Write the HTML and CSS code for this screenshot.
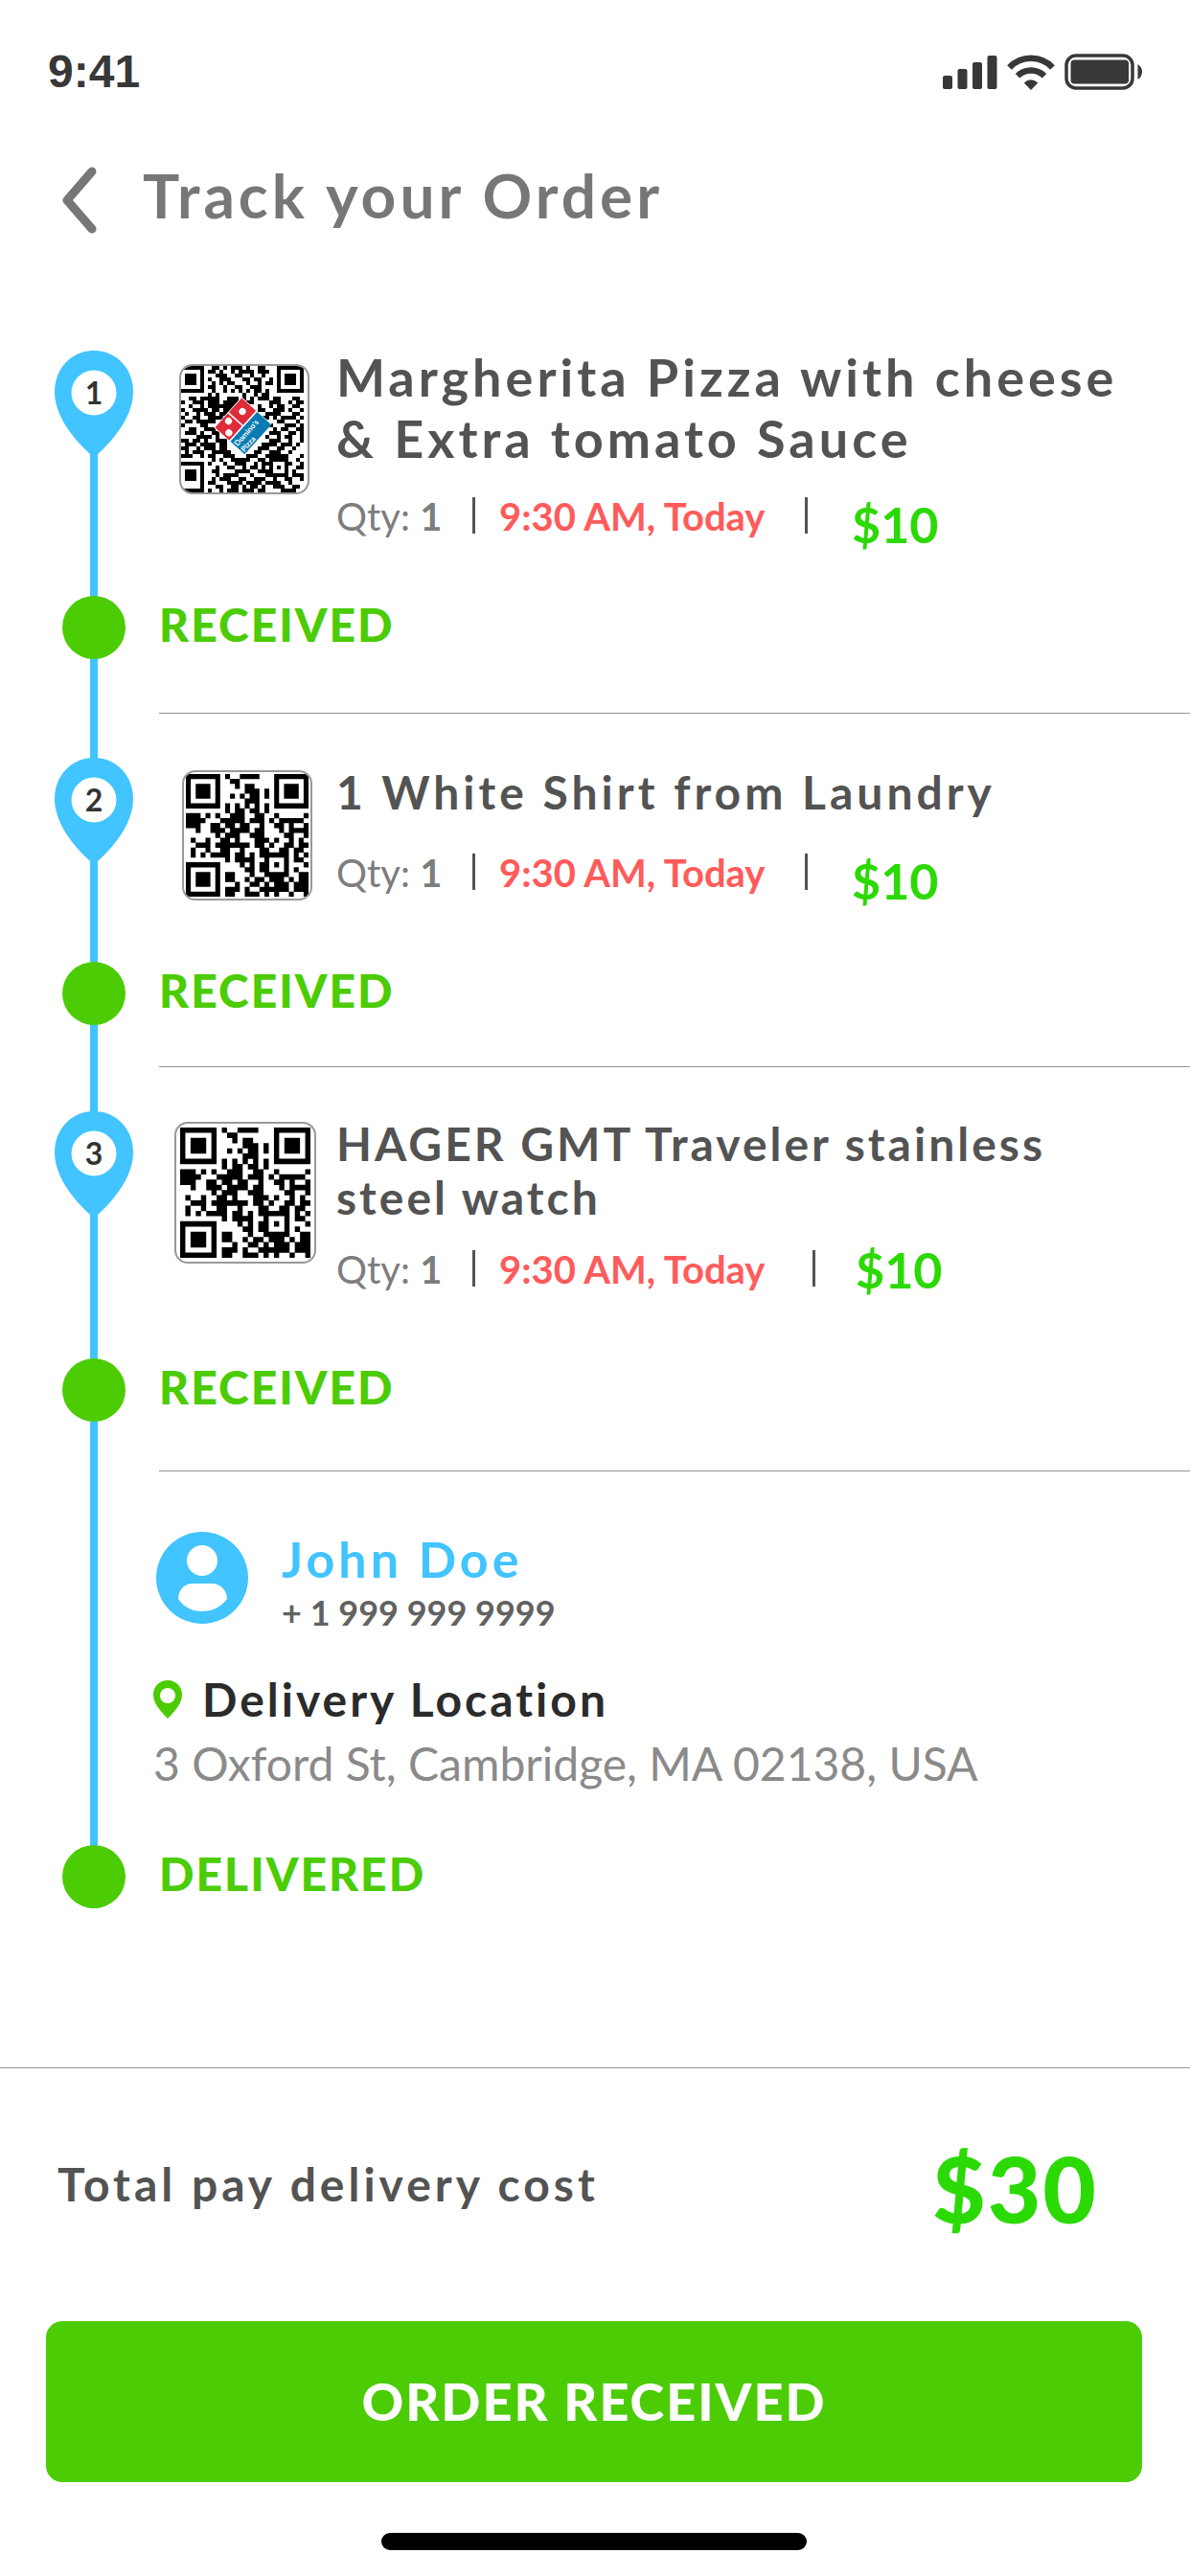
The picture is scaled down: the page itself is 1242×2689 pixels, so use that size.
FILE: index.html
```html
<!DOCTYPE html>
<html lang="en">
<head>
<meta charset="utf-8">
<meta name="viewport" content="width=device-width, initial-scale=1">
<title>Track your Order</title>
<link rel="stylesheet" href="styles.css">
</head>
<body>
<svg class="symbols" aria-hidden="true">
  <symbol id="pin" viewBox="0 0 82 108">
    <path fill="#41c4ff" d="M41 0C18 0 0 18 0 43C0 66 17 90 37 108H45C65 90 82 66 82 43C82 18 64 0 41 0Z"/>
    <circle cx="41" cy="44" r="23.5" fill="#fff"/>
  </symbol>
  <symbol id="qr-web" viewBox="0 -.5 25 25">
    <path stroke="#000" stroke-width="1.04" d="M0 0h7M8 0h1M11 0h4M18 0h7M0 1h1M6 1h1M9 1h2M18 1h1M24 1h1M0 2h1M2 2h3M6 2h1M10 2h1M12 2h2M18 2h1M20 2h3M24 2h1M0 3h1M2 3h3M6 3h1M12 3h3M16 3h1M18 3h1M20 3h3M24 3h1M0 4h1M2 4h3M6 4h1M9 4h1M11 4h1M13 4h2M16 4h1M18 4h1M20 4h3M24 4h1M0 5h1M6 5h1M12 5h3M18 5h1M24 5h1M0 6h7M8 6h1M10 6h1M12 6h1M14 6h1M16 6h1M18 6h7M8 7h1M10 7h2M13 7h2M16 7h1M0 8h3M4 8h1M6 8h1M9 8h3M14 8h2M18 8h1M24 8h1M0 9h4M7 9h5M13 9h3M17 9h1M19 9h5M0 10h3M5 10h2M8 10h2M11 10h2M15 10h1M18 10h2M21 10h1M24 10h1M2 11h1M5 11h3M9 11h4M14 11h2M19 11h1M21 11h4M6 12h1M8 12h3M13 12h2M15 12h1M20 12h2M24 12h1M1 13h1M4 13h1M7 13h2M10 13h1M14 13h3M18 13h1M21 13h1M23 13h1M2 14h3M6 14h7M14 14h2M17 14h1M20 14h2M23 14h2M1 15h1M4 15h1M7 15h2M11 15h1M15 15h2M19 15h2M22 15h2M1 16h1M3 16h1M5 16h4M10 16h2M13 16h1M15 16h6M22 16h1M24 16h1M8 17h1M10 17h4M16 17h1M20 17h1M22 17h2M0 18h7M11 18h1M13 18h1M15 18h2M18 18h1M20 18h1M24 18h1M0 19h1M6 19h1M12 19h2M15 19h2M20 19h1M22 19h1M0 20h1M2 20h3M6 20h1M8 20h2M13 20h1M16 20h5M23 20h2M0 21h1M2 21h3M6 21h1M8 21h2M12 21h1M14 21h2M17 21h3M21 21h1M23 21h2M0 22h1M2 22h3M6 22h1M10 22h1M13 22h2M16 22h1M18 22h3M22 22h3M0 23h1M6 23h1M8 23h3M12 23h1M15 23h5M20 23h1M22 23h3M0 24h7M8 24h2M12 24h3M16 24h1M18 24h1M21 24h1M24 24h1"/>
  </symbol>
</svg>

<div class="status-bar">
  <time class="clock">9:41</time>
  <svg class="system-icons" viewBox="0 0 208 38" role="img" aria-label="Signal, Wi-Fi and battery">
    <g fill="#383838">
      <rect x="0" y="23" width="10" height="14" rx="2"/>
      <rect x="15.5" y="16" width="10" height="21" rx="2"/>
      <rect x="31" y="9" width="10" height="28" rx="2"/>
      <rect x="46.500" y="2" width="10" height="35" rx="2"/>
      <path d="M84.700 30.500Q92 23.800 99.300 30.500L92 38Z"/>
      <rect x="133.500" y="6.500" width="60.500" height="25" rx="4"/>
      <path d="M203.500 11Q208 14 208 19T203.500 27Z"/>
    </g>
    <g fill="none" stroke="#383838">
      <path stroke-width="6.500" d="M69.500 14.500A31 31 0 0 1 114.500 14.500M78 23.300A20 20 0 0 1 106 23.300"/>
      <rect x="129" y="2" width="69" height="34" rx="10" stroke-width="3.500"/>
    </g>
  </svg>
</div>

<header class="page-header">
  <a class="back" href="#" aria-label="Back">
    <svg viewBox="0 0 37 70"><path d="M32 5L6 35L32 65" fill="none" stroke="#777" stroke-width="9" stroke-linecap="round" stroke-linejoin="round"/></svg>
  </a>
  <h1>Track your Order</h1>
</header>

<main>
  <section class="stop stop-first">
    <div class="rail"><span class="pin"><svg><use href="#pin"/></svg><b>1</b></span></div>
    <article class="item">
      <div class="qr">
        <svg viewBox="0 -.5 33 33" role="img" aria-label="QR code">
          <path stroke="#000" stroke-width="1.04" d="M0 0h6M8 0h2M11 0h1M13 0h3M17 0h1M20 0h2M25 0h7M5 1h1M7 1h2M10 1h1M13 1h1M15 1h4M20 1h3M25 1h1M31 1h1M1 2h3M5 2h1M9 2h3M14 2h2M18 2h1M21 2h1M25 2h1M27 2h3M31 2h1M1 3h3M5 3h1M7 3h1M10 3h3M16 3h2M19 3h2M23 3h1M25 3h1M27 3h3M31 3h1M1 4h3M5 4h1M8 4h1M10 4h1M12 4h2M17 4h1M20 4h1M22 4h2M25 4h1M27 4h3M31 4h1M5 5h1M7 5h2M11 5h1M14 5h2M18 5h3M25 5h1M31 5h1M0 6h6M8 6h1M11 6h1M13 6h1M15 6h1M17 6h1M19 6h2M22 6h1M25 6h7M7 7h1M9 7h1M16 7h1M19 7h1M21 7h2M2 8h2M5 8h5M12 8h3M16 8h1M18 8h1M20 8h3M24 8h2M29 8h2M0 9h1M3 9h3M7 9h3M11 9h4M17 9h2M23 9h3M28 9h1M30 9h2M2 10h1M5 10h1M7 10h7M15 10h3M20 10h1M23 10h1M25 10h2M29 10h2M0 11h1M3 11h4M8 11h2M11 11h4M20 11h2M24 11h3M28 11h1M31 11h1M1 12h1M4 12h1M6 12h3M10 12h3M22 12h4M29 12h2M0 13h1M3 13h2M7 13h4M21 13h2M24 13h1M26 13h4M31 13h1M1 14h2M4 14h5M21 14h1M25 14h2M30 14h1M0 15h1M5 15h2M22 15h2M27 15h3M31 15h1M2 16h2M6 16h3M24 16h1M26 16h2M30 16h2M1 17h3M5 17h1M8 17h2M23 17h3M28 17h2M31 17h1M4 18h4M9 18h1M22 18h1M25 18h1M27 18h2M31 18h1M0 19h2M3 19h2M6 19h1M9 19h3M23 19h3M28 19h1M31 19h1M1 20h3M5 20h4M10 20h2M21 20h4M26 20h3M30 20h1M0 21h2M4 21h1M6 21h3M10 21h2M20 21h3M25 21h2M29 21h1M1 22h1M3 22h3M8 22h5M19 22h2M23 22h3M28 22h1M0 23h3M5 23h1M7 23h2M11 23h3M17 23h3M22 23h6M31 23h1M8 24h1M10 24h1M13 24h5M20 24h2M23 24h5M30 24h1M0 25h6M7 25h1M11 25h1M14 25h3M19 25h1M21 25h3M27 25h2M31 25h1M5 26h1M9 26h1M12 26h2M16 26h1M18 26h2M21 26h1M23 26h1M25 26h1M27 26h1M30 26h2M1 27h3M5 27h1M8 27h2M14 27h4M20 27h4M27 27h1M29 27h1M1 28h3M5 28h1M9 28h1M11 28h4M18 28h1M22 28h6M29 28h3M1 29h3M5 29h1M8 29h1M10 29h3M15 29h2M19 29h3M24 29h1M27 29h2M31 29h1M5 30h1M7 30h2M12 30h4M17 30h4M22 30h4M28 30h1M5 31h1M9 31h2M13 31h2M16 31h1M18 31h2M21 31h1M24 31h3M29 31h2M0 32h6M7 32h1M10 32h1M12 32h3M16 32h3M20 32h2M26 32h4"/>
          <g transform="translate(16.2 15.2) rotate(-48)">
            <path fill="#fff" d="M-5.400-5.400H5.400V5.200H-5.400Z"/>
            <path fill="#df2b3a" d="M-5.200-5.200H-.2V-.2H-5.200Z M.2-5.200H5.200V-.2H.2Z"/>
            <path fill="#0a7bb2" d="M-5.200.2H5.200V5.200H-5.200Z"/>
            <circle cx="-3.800" cy="-1.600" r=".9" fill="#fff"/>
            <circle cx="-1.600" cy="-3.700" r=".9" fill="#fff"/>
            <circle cx="2.700" cy="-2.700" r=".9" fill="#fff"/>
            <text class="logo-text" x="-4.900" y="2.500">Domino's</text>
            <text class="logo-text" x="-4.900" y="4.800">Pizza</text>
          </g>
        </svg>
      </div>
      <div class="details">
        <h2>Margherita Pizza with cheese &amp; Extra tomato Sauce</h2>
        <p class="meta meta-dropped"><span>Qty: <b>1</b></span><i class="bar"></i><span class="when">9:30 AM, Today</span><i class="bar"></i><span class="price">$10</span></p>
      </div>
    </article>
    <div class="rail rail-dot"><span class="dot"></span></div>
    <p class="state">RECEIVED</p>
  </section>

  <section class="stop stop-second">
    <div class="rail"><span class="pin"><svg><use href="#pin"/></svg><b>2</b></span></div>
    <article class="item">
      <div class="qr qr-framed"><svg role="img" aria-label="QR code"><use href="#qr-web"/></svg></div>
      <div class="details">
        <h2>1 White Shirt from Laundry</h2>
        <p class="meta meta-dropped"><span>Qty: <b>1</b></span><i class="bar"></i><span class="when">9:30 AM, Today</span><i class="bar"></i><span class="price">$10</span></p>
      </div>
    </article>
    <div class="rail rail-dot"><span class="dot"></span></div>
    <p class="state">RECEIVED</p>
  </section>

  <section class="stop stop-third">
    <div class="rail"><span class="pin"><svg><use href="#pin"/></svg><b>3</b></span></div>
    <article class="item">
      <div class="qr qr-framed qr-large"><svg role="img" aria-label="QR code"><use href="#qr-web"/></svg></div>
      <div class="details">
        <h2>HAGER GMT Traveler stainless steel watch</h2>
        <p class="meta"><span>Qty: <b>1</b></span><i class="bar"></i><span class="when">9:30 AM, Today</span><i class="bar"></i><span class="price">$10</span></p>
      </div>
    </article>
    <div class="rail rail-dot"><span class="dot"></span></div>
    <p class="state">RECEIVED</p>
  </section>

  <section class="stop stop-last">
    <div class="rail"></div>
    <div class="delivery">
      <div class="person">
        <svg class="avatar" viewBox="0 0 96 96" aria-hidden="true">
          <circle cx="48" cy="48" r="48" fill="#41c4ff"/>
          <circle cx="48" cy="30" r="16" fill="#fff"/>
          <path fill="#fff" d="M38 54H58C67 54 74 61 74 70Q64 83 48 83T23 70C23 61 29 54 38 54Z"/>
        </svg>
        <div>
          <h2 class="name">John Doe</h2>
          <a class="phone" href="tel:+19999999999">+ 1 999 999 9999</a>
        </div>
      </div>
      <h3 class="place">
        <svg viewBox="0 0 30 40" aria-hidden="true"><path fill="#4bcc04" fill-rule="evenodd" d="M15 0C6 0 0 7 0 15C0 24 7 32 15 40C23 32 30 24 30 15C30 7 24 0 15 0ZM15 8A8 8 0 1 1 15 24A8 8 0 1 1 15 8Z"/></svg>
        Delivery Location
      </h3>
      <address>3 Oxford St, Cambridge, MA 02138, USA</address>
    </div>
    <div class="rail rail-dot"><span class="dot"></span></div>
    <p class="state">DELIVERED</p>
  </section>
</main>

<footer>
  <p class="total"><span>Total pay delivery cost</span><strong>$30</strong></p>
  <button class="confirm" type="button">ORDER RECEIVED</button>
  <div class="home-indicator"></div>
</footer>
</body>
</html>
```
FILE: styles.css
```css
* { box-sizing: border-box; }

body {
  margin: 0;
  background: #fff;
  color: #535353;
  font-family: Lato, "Open Sans", sans-serif;
}

h1, h2, h3, p { margin: 0; }
svg { display: block; }
.symbols { position: absolute; width: 0; height: 0; }

.status-bar {
  display: flex;
  justify-content: space-between;
  align-items: center;
  padding: 47px 50px 0;
}
.clock {
  font: bold 48px/56px "Liberation Sans", Arial, sans-serif;
  color: #383838;
}
.system-icons { width: 208px; height: 38px; }

.page-header {
  display: flex;
  align-items: flex-end;
  gap: 48px;
  padding: 61px 64px 118px;
  color: #777;
}
.back svg { width: 37px; height: 70px; }
h1 {
  font-size: 64px;
  line-height: 80px;
  letter-spacing: 4px;
}

.stop {
  display: grid;
  grid-template-columns: 82px 1fr;
  column-gap: 21px;
  padding-left: 57px;
}
.rail {
  display: flex;
  flex-direction: column;
  align-items: center;
  padding-top: 46px;
  background: linear-gradient(#41c4ff, #41c4ff) center / 8px 100% no-repeat;
}
.rail-dot, .stop-last .rail { padding-top: 0; }
.stop-first .rail:first-child {
  margin-top: 4px;
  padding-top: 0;
}
.pin {
  display: grid;
  justify-items: center;
}
.pin > * { grid-area: 1 / 1; }
.pin svg { width: 82px; height: 108px; }
.pin b {
  font-size: 32px;
  line-height: 88px;
  color: #333;
}
.dot {
  width: 66px;
  height: 66px;
  border-radius: 50%;
  background: #4bcc04;
}

.item {
  display: grid;
  grid-template-columns: 191px 1fr;
  padding-top: 52px;
}
.stop-first .item { padding: 0 0 55px; }
.stop-second .item { padding: 54px 0 64px; }
.stop-third .item { padding-bottom: 73px; }

.qr {
  width: 136px;
  height: 136px;
  margin: 5px 0 0 30px;
  border: 2px solid #999;
  border-radius: 14px;
  overflow: hidden;
}
.qr svg { width: 100%; height: 100%; }
.qr-framed { padding: 2px; }
.qr-large {
  width: 148px;
  height: 148px;
  margin-left: 22px;
  padding: 4px;
}
.stop-first .qr { margin: 18px 0 0 27px; }
.logo-text {
  font: bold 2px Lato, sans-serif;
  fill: #fff;
}

.item h2 {
  max-width: 800px;
  margin-bottom: 27px;
  font-size: 48px;
  line-height: 56px;
  letter-spacing: 3px;
}
.stop-first h2 {
  max-width: 840px;
  margin-bottom: 29px;
  font-size: 54px;
  line-height: 64px;
  letter-spacing: 4px;
}
.stop-second h2 {
  margin-bottom: 36px;
  letter-spacing: 4px;
}

.meta {
  display: grid;
  grid-template-columns: 142px 28px 319px 49px auto;
  font-size: 40px;
  line-height: 40px;
  color: #7d7d7d;
}
.stop-third .meta { grid-template-columns: 142px 28px 327px 45px auto; }
.bar {
  width: 3px;
  height: 38px;
  background: #535353;
}
.when {
  font-weight: 700;
  color: #ff5b5b;
}
.price {
  font-size: 52px;
  font-weight: 700;
  color: #2bd905;
}
.meta-dropped .price { padding-top: 8px; }

.state {
  margin-left: 6px;
  border-bottom: 1px solid #949494;
  font-size: 48px;
  font-weight: 900;
  line-height: 60px;
  letter-spacing: 2px;
  color: #4bcc04;
}
.stop-first .state { padding-bottom: 62px; }
.stop-second .state { padding-bottom: 49px; }
.stop-third .state { padding-bottom: 57px; }
.stop-last .state { border: 0; }

.delivery { padding: 63px 0 57px; }
.person {
  display: flex;
  gap: 35px;
  margin-bottom: 41px;
  padding-left: 3px;
}
.avatar {
  width: 96px;
  height: 96px;
}
.name {
  margin-bottom: 6px;
  font-size: 52px;
  line-height: 56px;
  letter-spacing: 4px;
  color: #41c4ff;
}
.phone {
  display: block;
  font-size: 36px;
  font-weight: 700;
  line-height: 44px;
  color: #626262;
  text-decoration: none;
}
.place {
  display: flex;
  align-items: center;
  gap: 21px;
  margin-bottom: 11px;
  font-size: 48px;
  line-height: 56px;
  letter-spacing: 3px;
  color: #2b2b2b;
}
.place svg { width: 30px; height: 40px; }
address {
  font-size: 48px;
  font-style: normal;
  line-height: 56px;
  color: #8a8a8a;
}

footer {
  margin-top: 166px;
  padding: 77px 50px 26px 48px;
  border-top: 1px solid #949494;
}
.total {
  display: flex;
  justify-content: space-between;
  padding: 0 46px 0 12px;
  font-size: 48px;
  font-weight: 700;
  line-height: 88px;
  letter-spacing: 4px;
}
.total strong {
  font-size: 96px;
  line-height: 96px;
  letter-spacing: 2px;
  color: #2bd905;
}
.confirm {
  display: block;
  width: 100%;
  margin: 91px 0 53px;
  padding: 52px;
  border: 0;
  border-radius: 17px;
  background: #4bcc04;
  color: #fff;
  font: 900 54px/64px Lato, "Open Sans", sans-serif;
  letter-spacing: 2px;
}
.home-indicator {
  width: 444px;
  height: 18px;
  margin: 0 auto;
  border-radius: 9px;
  background: #000;
}
```
